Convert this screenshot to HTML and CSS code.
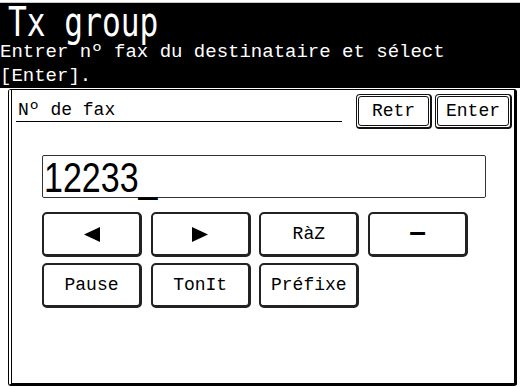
FILE: index.html
```html
<!DOCTYPE html>
<html lang="fr">
<head>
<meta charset="utf-8">
<title>Tx group</title>
<link rel="stylesheet" href="styles.css">
</head>
<body>
<div class="screen">
  <header class="head">
    <div class="title"><span>Tx group</span></div>
    <div class="msg">Entrer nº fax du destinataire et sélect<br>[Enter].</div>
  </header>
  <section class="panel">
    <div class="panel-top">
      <div class="label">Nº de fax</div>
      <div class="tbtn retr"><span>Retr</span></div>
      <div class="tbtn enter"><span>Enter</span></div>
    </div>
    <div class="entry"><span>12233_</span></div>
    <div class="keys">
      <div class="key"><svg class="tri" width="16" height="15" viewBox="0 0 16 15"><polygon points="16,0 16,15 0,7.5"/></svg></div>
      <div class="key"><svg class="tri" width="16" height="15" viewBox="0 0 16 15"><polygon points="0,0 0,15 16,7.5"/></svg></div>
      <div class="key">RàZ</div>
      <div class="key"><span class="dash">–</span></div>
      <div class="key">Pause</div>
      <div class="key">TonIt</div>
      <div class="key">Préfixe</div>
    </div>
  </section>
</div>
</body>
</html>
```
FILE: styles.css
```css
* { box-sizing: border-box; }
html, body { margin: 0; background: #fff; }
body { font-family: "Liberation Mono", "DejaVu Sans Mono", monospace; color: #000; }

.screen { width: 520px; height: 387px; padding-top: 2px; overflow: hidden; }

.head {
  background: #000;
  color: #fff;
  border-top: 1px solid #c8c8c8;
  height: 86px;
}
.title {
  font-family: "DejaVu Sans Mono", monospace;
  font-size: 40px;
  line-height: 34px;
  height: 36px;
  padding: 2px 0 0 8px;
  white-space: nowrap;
}
.title span { display: inline-block; transform: scaleX(0.78); transform-origin: 0 50%; }
.msg {
  font-size: 19px;
  line-height: 24px;
  margin-top: 1px;
  white-space: nowrap;
}

.panel {
  margin: 1px 3px 0 8px;
  height: 297px;
  border: 1px solid #000;
  border-left: 4px double #000;
  border-right-width: 3px;
  border-bottom-width: 3px;
  border-radius: 3px;
}

.panel-top { display: flex; align-items: flex-start; }
.label {
  margin-left: 4px;
  width: 326px;
  padding: 11px 0 2px 2px;
  border-bottom: 1px solid #000;
  font-size: 18px;
  line-height: 18px;
  white-space: nowrap;
}
.tbtn {
  margin-top: 4px;
  height: 35px;
  width: 76px;
  border: 1px solid #111;
  border-right-width: 2px;
  border-bottom-width: 2px;
  border-radius: 4px;
  padding: 1px;
  font-size: 18px;
}
.tbtn span {
  display: flex;
  align-items: center;
  justify-content: center;
  height: 100%;
  border: 1px solid #111;
  border-radius: 3px;
}
.retr { margin-left: 14px; }
.enter { margin-left: 3px; width: 77px; }

.entry {
  margin: 26px 0 0 30px;
  width: 444px;
  height: 43px;
  border: 1px solid #333;
  border-radius: 2px;
  padding: 1px 0 0 1px;
  font-family: "Liberation Sans", sans-serif;
  font-size: 42px;
  line-height: 41px;
  white-space: nowrap;
}
.entry span { display: inline-block; transform: scaleX(0.81); transform-origin: 0 50%; }

.keys {
  display: grid;
  grid-template-columns: repeat(4, 100px);
  column-gap: 8.67px;
  grid-auto-rows: 45px;
  row-gap: 6px;
  margin: 14px 0 0 30px;
}
.key {
  border: 2px solid #222;
  border-right-width: 3px;
  border-bottom-width: 3px;
  border-radius: 5px;
  display: flex;
  align-items: center;
  justify-content: center;
  font-size: 18px;
  white-space: nowrap;
}
.tri { display: block; fill: #000; }
.dash {
  font-family: "Liberation Sans", sans-serif;
  font-weight: bold;
  font-size: 30px;
  line-height: 30px;
  margin-bottom: 4px;
}
```
